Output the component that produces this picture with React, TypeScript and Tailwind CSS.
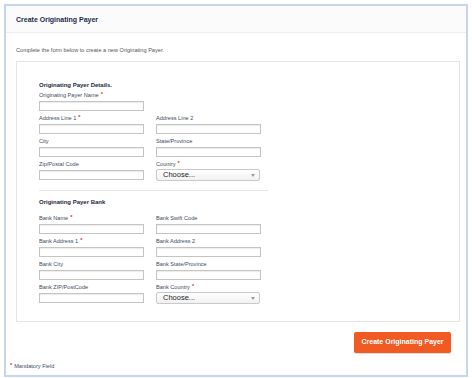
const Req = () => <span className="text-[#e3262b] font-bold ml-[2px] relative -top-[1px]">*</span>;

const Field = ({ label, required }: { label: string; required?: boolean }) => (
  <div className="flex flex-col w-[106px]">
    <div className="h-[8px] leading-[8px] text-[5.6px] text-[#3d4c5e] whitespace-nowrap">
      {label}
      {required && <Req />}
    </div>
    <input
      type="text"
      className="mt-[2px] h-[10px] w-[105px] border border-[#c4c4c4] bg-white shadow-[inset_0_1px_1px_rgba(0,0,0,0.08)] outline-none"
    />
  </div>
);

const SelectField = ({ label, required }: { label: string; required?: boolean }) => (
  <div className="flex flex-col w-[106px]">
    <div className="h-[8px] leading-[8px] text-[5.6px] text-[#3d4c5e] whitespace-nowrap">
      {label}
      {required && <Req />}
    </div>
    <div className="mt-[1px] h-[12px] w-[104px] border border-[#c9c9c9] rounded-[2px] bg-gradient-to-b from-white to-[#f1f1f1] flex items-center justify-between pl-[6px] pr-[4px]">
      <span className="text-[7.5px] leading-[10px] text-[#222]">Choose...</span>
      <svg width="4" height="3" viewBox="0 0 4 3">
        <path d="M0 0 L4 0 L2 3 Z" fill="#9a9a9a" />
      </svg>
    </div>
  </div>
);

const Row = ({ children }: { children: React.ReactNode }) => (
  <div className="flex gap-x-[11px] h-[23px]">{children}</div>
);

const SectionTitle = ({ text }: { text: string }) => (
  <div className="h-[8px] leading-[8px] text-[6px] font-bold text-[#1d2a3a]">{text}</div>
);

export default function App() {
  return (
    <div className="w-[472px] h-[378px] bg-white font-['Liberation_Sans',Arial,sans-serif] pt-[4px] pl-[4px]">
      <div className="w-[464px] h-[373px] border-2 border-[#c6d5ea] flex flex-col">
        <div className="h-[27px] bg-[#fbfbfb] border-b border-[#eeeeee] flex items-center pl-[10px] pt-[2px]">
          <span className="text-[7px] font-bold text-[#1c2d4a]">Create Originating Payer</span>
        </div>
        <div className="mt-[13px] pl-[10px] h-[8px] leading-[8px] text-[5.6px] text-[#555]">
          Complete the form below to create a new Originating Payer.
        </div>
        <div className="mt-[7px] ml-[10px] w-[444px] border border-[#e4e4e4] pt-[19px] pl-[22px] pb-[15px]">
          <div className="pb-[2px]">
            <SectionTitle text="Originating Payer Details." />
          </div>
          <Row>
            <Field label="Originating Payer Name" required />
          </Row>
          <Row>
            <Field label="Address Line 1" required />
            <Field label="Address Line 2" />
          </Row>
          <Row>
            <Field label="City" />
            <Field label="State/Province" />
          </Row>
          <Row>
            <Field label="Zip/Postal Code" />
            <SelectField label="Country" required />
          </Row>
          <div className="mt-[7px] w-[229px] h-px bg-[#e6e6e6]" />
          <div className="mt-[7px] pb-[8px]">
            <SectionTitle text="Originating Payer Bank" />
          </div>
          <Row>
            <Field label="Bank Name" required />
            <Field label="Bank Swift Code" />
          </Row>
          <Row>
            <Field label="Bank Address 1" required />
            <Field label="Bank Address 2" />
          </Row>
          <Row>
            <Field label="Bank City" />
            <Field label="Bank State/Province" />
          </Row>
          <Row>
            <Field label="Bank ZIP/PostCode" />
            <SelectField label="Bank Country" required />
          </Row>
        </div>
        <div className="flex justify-end pr-[15px] mt-[10px]">
          <button className="w-[97px] h-[21px] rounded-[2px] bg-[#f15a22] shadow-[0_1px_1px_rgba(0,0,0,0.15)] text-white text-[7px] font-bold">
            Create Originating Payer
          </button>
        </div>
        <div className="mt-[9px] pl-[4px] h-[8px] leading-[8px] text-[5.6px] text-[#3d4c5e]">
          <span className="text-[#e3262b] font-bold relative -top-[1px] mr-[2px]">*</span>
          Mandatory Field
        </div>
      </div>
    </div>
  );
}
